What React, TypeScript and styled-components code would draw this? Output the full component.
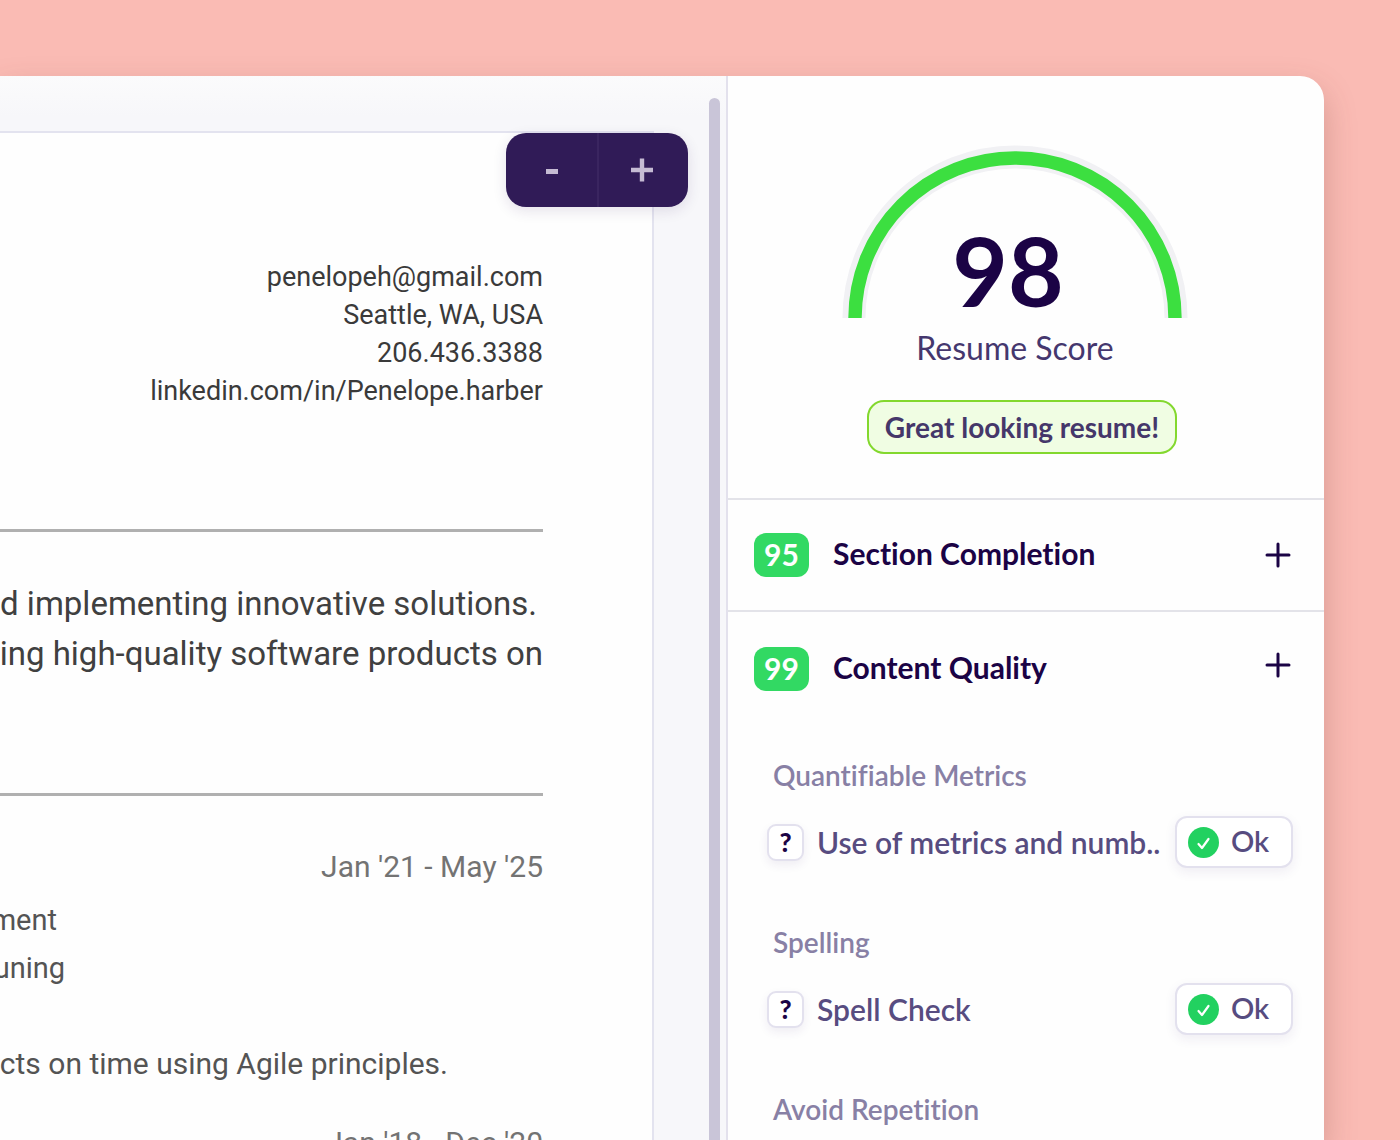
import React from "react";
import styled, { createGlobalStyle } from "styled-components";

const GlobalStyle = createGlobalStyle`
  * { box-sizing: border-box; }
  body { margin: 0; background: #fabbb4; font-family: Lato, "Open Sans", sans-serif; }
  h2, h3, p { margin: 0; padding: 0; font-weight: inherit; }
  button { margin: 0; padding: 0; border: 0; background: none; font: inherit; color: inherit; cursor: pointer; }
`;

const Page = styled.div`
  height: 100vh;
  padding: 76px 76px 0 0;
  overflow: hidden;
`;

const Window = styled.main`
  display: grid;
  grid-template-columns: minmax(0, 1fr) 598px;
  height: 100%;
  border-top-right-radius: 24px;
  background: #fefefe;
  box-shadow: 0 14px 32px rgba(120, 60, 50, 0.28);
`;

const Preview = styled.section`
  display: flex;
  justify-content: space-between;
  min-width: 0;
  overflow: hidden;
  padding-right: 6px;
  background: linear-gradient(#fbfbfc, #f7f7fa 40px);
`;

const Paper = styled.article`
  position: relative;
  flex: 1;
  min-width: 0;
  margin: 55px 55px 0 0;
  padding: 125px 109px 0 0;
  border: 2px solid #e3e3ef;
  border-width: 2px 2px 0 0;
  background: #fefefe;
  font-family: Roboto, sans-serif;
  text-align: right;
  white-space: nowrap;
`;

const Scrollbar = styled.div`
  width: 11px;
  margin-top: 22px;
  border-radius: 6px 6px 0 0;
  background: #c9c5d8;
`;

const ZoomBar = styled.div`
  position: absolute;
  top: 0;
  right: -36px;
  display: grid;
  grid-template-columns: 1fr 1fr;
  width: 182px;
  height: 74px;
  border-radius: 20px;
  background: #301b57;
  box-shadow: 0 4px 14px rgba(48, 27, 87, 0.12);
`;

const ZoomButton = styled.button`
  display: grid;
  place-items: center;
  color: #c5bbd3;
  & + & {
    padding-right: 4px;
    border-left: 2px solid #3a2560;
  }
`;

const Contact = styled.address`
  font-style: normal;
  font-size: 27px;
  line-height: 38px;
  color: #3a3a3a;
`;

const Rule = styled.hr<{ $before: number; $after: number }>`
  height: 3px;
  margin: ${(p) => p.$before}px 0 ${(p) => p.$after}px;
  border: 0;
  background: #b0b0b0;
`;

const Line = styled.p<{ $end?: number }>`
  display: flex;
  justify-content: flex-end;
  padding-right: ${(p) => p.$end ?? 0}px;
`;

const Summary = styled.div`
  font-size: 33px;
  line-height: 50px;
  color: #404040;
`;

const JobDate = styled.p`
  font-size: 30px;
  line-height: 58px;
  color: #737373;
`;

const JobText = styled.div`
  padding-bottom: 48px;
  font-size: 29px;
  line-height: 48px;
  color: #545454;
`;

const JobNote = styled(JobText)`
  padding-bottom: 26px;
  font-size: 30px;
`;

const Report = styled.aside`
  min-width: 0;
  overflow: hidden;
  border-left: 2px solid #e3e1ed;
  font-variant-ligatures: none;
`;

const Score = styled.section`
  display: flex;
  flex-direction: column;
  height: 422px;
  padding-top: 69px;
`;

const Gauge = styled.div`
  display: grid;
  justify-items: center;
  padding-right: 22px;
  & > * { grid-area: 1 / 1; }
`;

const ScoreValue = styled.strong`
  align-self: end;
  padding-right: 14px;
  font-size: 96px;
  line-height: 96px;
  font-weight: 700;
  color: #1b0345;
`;

const ScoreLabel = styled.h2`
  margin-top: 10px;
  padding-right: 22px;
  font-size: 32px;
  line-height: 40px;
  text-align: center;
  color: #45376e;
`;

const VerdictRow = styled.div`
  display: flex;
  justify-content: center;
  margin-top: 32px;
  padding-right: 8px;
`;

const Verdict = styled.p`
  padding: 0 16px;
  border: 2px solid #83d82e;
  border-radius: 17px;
  background: #f0fde3;
  font-size: 28px;
  line-height: 50px;
  font-weight: 700;
  color: #45376a;
`;

const Badge = styled.span`
  width: 55px;
  height: 44px;
  border-radius: 12px;
  background: #32d963;
  font-size: 30px;
  line-height: 42px;
  font-weight: 700;
  text-align: center;
  color: #fff;
`;

const SectionTitle = styled.h3`
  flex: 1;
  font-size: 30px;
  line-height: 40px;
  font-weight: 700;
  color: #1b0345;
`;

const Toggle = styled.button`
  display: grid;
  place-items: center;
  width: 36px;
  height: 36px;
  color: #1b0345;
`;

const SectionHeader = styled.div<{ $open?: boolean }>`
  display: flex;
  align-items: flex-start;
  gap: 24px;
  padding: ${(p) => (p.$open ? "35px" : "33px")} 28px 33px 26px;
  border-top: 2px solid #e3e3e9;

  ${Toggle} {
    align-self: ${(p) => (p.$open ? "flex-start" : "center")};
  }
`;

const Checks = styled.div`
  display: grid;
  gap: 56px;
  padding: 33px 31px 0 39px;
`;

const CheckGroup = styled.div`
  display: grid;
  gap: 23px;
`;

const CheckTitle = styled.h3`
  padding-left: 6px;
  font-size: 28px;
  line-height: 36px;
  font-weight: 600;
  color: #8880a5;
`;

const CheckRow = styled.div`
  display: flex;
  align-items: center;
  height: 52px;
`;

const Help = styled.button`
  width: 37px;
  height: 37px;
  margin-right: 13px;
  border: 2px solid #e3e1ee;
  border-radius: 9px;
  background: #fff;
  box-shadow: 0 4px 10px rgba(60, 40, 110, 0.08);
  font-size: 26px;
  line-height: 33px;
  font-weight: 900;
  color: #1b0345;
`;

const CheckName = styled.span`
  flex: 1;
  font-size: 30px;
  line-height: 40px;
  font-weight: 600;
  white-space: nowrap;
  color: #574c80;
`;

const Status = styled.span`
  display: flex;
  align-items: center;
  gap: 12px;
  width: 118px;
  height: 52px;
  padding-left: 11px;
  border: 2px solid #e3e1ee;
  border-radius: 12px;
  background: #fff;
  box-shadow: 0 4px 12px rgba(60, 40, 110, 0.08);
  color: #574c80;
`;

const StatusText = styled.span`
  padding-bottom: 2px;
  font-size: 29px;
  line-height: 40px;
  font-weight: 600;
`;

function PlusIcon() {
  return (
    <svg width="26" height="26" viewBox="0 0 26 26" fill="none" stroke="currentColor" strokeWidth="3" strokeLinecap="round" aria-hidden="true">
      <path d="M13 2v22M2 13h22" />
    </svg>
  );
}

function CheckIcon() {
  return (
    <svg width="31" height="31" viewBox="0 0 31 31" fill="none" aria-hidden="true">
      <circle cx="15.5" cy="15.5" r="15.5" fill="#22d160" />
      <path d="M10.5 17l3.5 4 6.5-9" stroke="#fff" strokeWidth="2.2" strokeLinecap="round" strokeLinejoin="round" />
    </svg>
  );
}

function Check({ title, name }: { title: string; name?: string }) {
  return (
    <CheckGroup>
      <CheckTitle>{title}</CheckTitle>
      {name && (
        <CheckRow>
          <Help type="button">?</Help>
          <CheckName>{name}</CheckName>
          <Status>
            <CheckIcon />
            <StatusText>Ok</StatusText>
          </Status>
        </CheckRow>
      )}
    </CheckGroup>
  );
}

export default function App() {
  return (
    <Page>
      <GlobalStyle />
      <Window>
        <Preview>
          <Paper>
            <ZoomBar>
              <ZoomButton type="button" aria-label="-">
                <svg width="24" height="24" viewBox="0 0 24 24" stroke="currentColor" strokeWidth="5" aria-hidden="true">
                  <path d="M6 13.5h12" />
                </svg>
              </ZoomButton>
              <ZoomButton type="button" aria-label="+">
                <svg width="24" height="24" viewBox="0 0 24 24" stroke="currentColor" strokeWidth="4.4" aria-hidden="true">
                  <path d="M12 .5v23M1 12h22" />
                </svg>
              </ZoomButton>
            </ZoomBar>
            <Contact>
              <Line>penelopeh@gmail.com</Line>
              <Line>Seattle, WA, USA</Line>
              <Line>206.436.3388</Line>
              <Line>linkedin.com/in/Penelope.harber</Line>
            </Contact>
            <Rule $before={119} $after={47} />
            <Summary>
              <Line $end={6}>d implementing innovative solutions.</Line>
              <Line>ing high-quality software products on</Line>
            </Summary>
            <Rule $before={114} $after={42} />
            <JobDate>Jan '21 - May '25</JobDate>
            <JobText>
              <Line $end={486}>ment</Line>
              <Line $end={478}>uning</Line>
            </JobText>
            <JobNote>
              <Line $end={95}>cts on time using Agile principles.</Line>
            </JobNote>
            <JobDate>Jan '18 - Dec '20</JobDate>
          </Paper>
          <Scrollbar />
        </Preview>
        <Report>
          <Score>
            <Gauge>
              <svg width="346" height="173" viewBox="0 0 346 173" fill="none" role="img" aria-label="98">
                <path d="M12 173a161 161 0 0 1 322 0" stroke="#f1f1f4" strokeWidth="23" />
                <path d="M13 173a160 160 0 0 1 320 0" stroke="#3cdf40" strokeWidth="13.4" />
              </svg>
              <ScoreValue>98</ScoreValue>
            </Gauge>
            <ScoreLabel>Resume Score</ScoreLabel>
            <VerdictRow>
              <Verdict>Great looking resume!</Verdict>
            </VerdictRow>
          </Score>
          <SectionHeader>
            <Badge>95</Badge>
            <SectionTitle>Section Completion</SectionTitle>
            <Toggle type="button" aria-label="Section Completion"><PlusIcon /></Toggle>
          </SectionHeader>
          <SectionHeader $open>
            <Badge>99</Badge>
            <SectionTitle>Content Quality</SectionTitle>
            <Toggle type="button" aria-label="Content Quality"><PlusIcon /></Toggle>
          </SectionHeader>
          <Checks>
            <Check title="Quantifiable Metrics" name="Use of metrics and numb.." />
            <Check title="Spelling" name="Spell Check" />
            <Check title="Avoid Repetition" />
          </Checks>
        </Report>
      </Window>
    </Page>
  );
}
